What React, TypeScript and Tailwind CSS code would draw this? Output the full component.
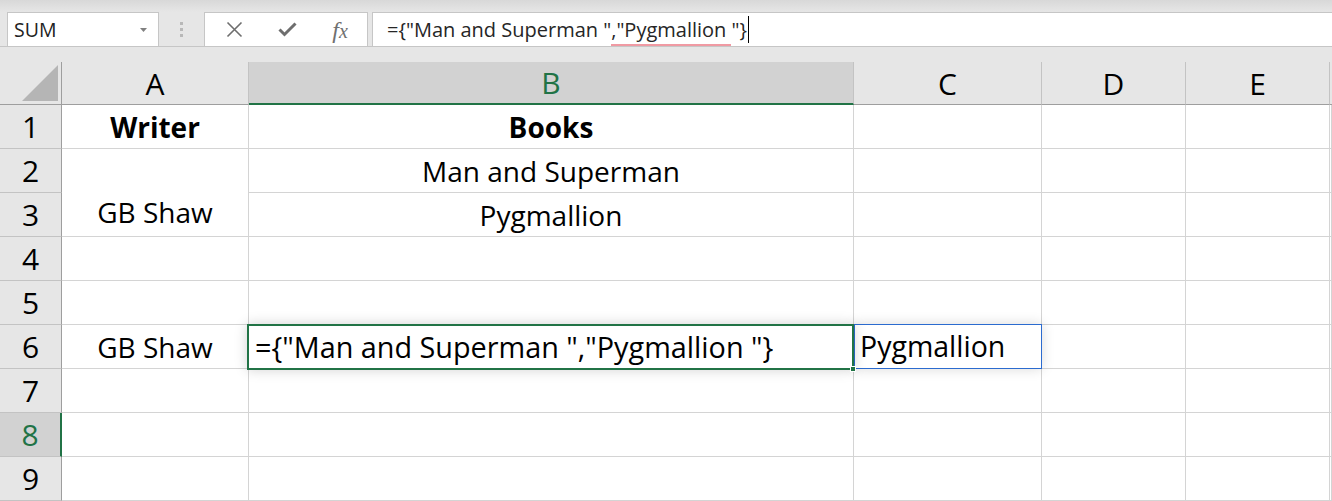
import React from "react";

const cellFont = "font-['Open_Sans','Noto_Sans',sans-serif]";
const uiFont = "font-['Open_Sans','Noto_Sans',sans-serif]";

function RowHeader({ n, selected }: { n: number; selected?: boolean }) {
  return (
    <div
      className={
        "flex items-center justify-center border-b border-[#c3c3c3] text-[30px] " +
        (selected
          ? "bg-[#d2d2d2] text-[#217346] border-r-2 border-r-[#217346]"
          : "bg-[#e6e6e6] text-black border-r border-r-[#9e9e9e]")
      }
    >
      {n}
    </div>
  );
}

function Cell({
  children,
  className = "",
}: {
  children?: React.ReactNode;
  className?: string;
}) {
  return (
    <div
      className={
        "relative flex items-center justify-center border-r border-b border-[#d4d4d4] bg-white text-[28px] text-black whitespace-nowrap " +
        className
      }
    >
      {children}
    </div>
  );
}

export default function App() {
  const formula = '={"Man and Superman ","Pygmallion "}';
  return (
    <div className={"w-[1332px] h-[501px] overflow-hidden bg-[#e6e6e6] flex flex-col " + cellFont}>
      {/* top band */}
      <div className="h-[12px] bg-gradient-to-b from-[#d8d8d8] to-[#e6e6e6]" />
      {/* formula bar */}
      <div className="h-[35px] flex items-stretch border-b border-[#c6c6c6] relative">
        <div className="w-[7px]" />
        <div className={"w-[152px] border border-[#c6c6c6] border-b-0 bg-white flex items-center justify-between pl-[6px] pr-[11px] text-[19.5px] text-[#222] " + uiFont}>
          <span>SUM</span>
          <svg width="7" height="4" viewBox="0 0 7 4">
            <path d="M0 0 L7 0 L3.5 4 Z" fill="#808080" />
          </svg>
        </div>
        <div className="w-[45px] flex flex-col items-center justify-center gap-[3px]">
          <div className="w-[3px] h-[3px] bg-[#b8b8b8]" />
          <div className="w-[3px] h-[3px] bg-[#b8b8b8]" />
          <div className="w-[3px] h-[3px] bg-[#b8b8b8]" />
        </div>
        <div className="w-[164px] border border-[#c6c6c6] border-b-0 bg-white flex items-center">
          <div className="w-[56px] flex justify-center pl-[2px]">
            <svg width="17" height="17" viewBox="0 0 17 17">
              <path d="M1.5 1.5 L15.5 15.5 M15.5 1.5 L1.5 15.5" stroke="#6e6e6e" strokeWidth="1.6" fill="none" />
            </svg>
          </div>
          <div className="w-[52px] flex justify-center">
            <svg width="19" height="15" viewBox="0 0 19 15">
              <path d="M1.5 7.5 L6.5 12.5 L17.5 1.5" stroke="#6e6e6e" strokeWidth="3" fill="none" />
            </svg>
          </div>
          <div className="w-[54px] flex justify-center">
            <span className="font-['Liberation_Serif',serif] italic text-[24px] text-[#707070] leading-none">
              f<span className="text-[20px]">x</span>
            </span>
          </div>
        </div>
        <div className="w-[4px]" />
        <div className={"flex-1 border-t border-l border-[#c6c6c6] bg-white flex items-center pl-[14px] text-[20px] text-[#262626] " + uiFont}>
          <span className="relative whitespace-pre">
            {'={"Man and Superman "'}
            <span className="relative">
              {',"Pygmallion'}
              <span className="absolute left-0 -right-[5px] -bottom-[3px] h-[2px] bg-[#f09aa3]" />
            </span>
            {' "}'}
          </span>
          <div className="w-[1px] h-[27px] bg-black ml-[1px]" />
        </div>
      </div>
      <div className="h-[15px]" />
      {/* sheet */}
      <div className="grid grid-cols-[62px_187px_605px_188px_144px_144px_1fr] grid-rows-[43px_repeat(9,44px)]">
        {/* header row */}
        <div className="relative bg-[#e6e6e6] border-r border-b border-[#9e9e9e]">
          <svg className="absolute right-[3px] bottom-[3px]" width="36" height="36" viewBox="0 0 36 36">
            <path d="M36 0 L36 36 L0 36 Z" fill="#b5b5b5" />
          </svg>
        </div>
        <div className="flex items-center justify-center bg-[#e6e6e6] border-r border-r-[#c3c3c3] border-b border-b-[#9e9e9e] text-[30px]">A</div>
        <div className="flex items-center justify-center bg-[#d2d2d2] border-r border-r-[#c3c3c3] border-b-2 border-b-[#217346] text-[30px] text-[#217346]">B</div>
        <div className="flex items-center justify-center bg-[#e6e6e6] border-r border-r-[#c3c3c3] border-b border-b-[#9e9e9e] text-[30px]">C</div>
        <div className="flex items-center justify-center bg-[#e6e6e6] border-r border-r-[#c3c3c3] border-b border-b-[#9e9e9e] text-[30px]">D</div>
        <div className="flex items-center justify-center bg-[#e6e6e6] border-r border-r-[#c3c3c3] border-b border-b-[#9e9e9e] text-[30px]">E</div>
        <div className="bg-[#e6e6e6] border-b border-b-[#9e9e9e]" />

        {/* row 1 */}
        <RowHeader n={1} />
        <Cell className="font-bold">Writer</Cell>
        <Cell className="font-bold">Books</Cell>
        <Cell />
        <Cell />
        <Cell />
        <Cell />

        {/* row 2 (A2:A3 merged) */}
        <RowHeader n={2} />
        <Cell className="row-span-2 !items-end pb-[3px]">GB Shaw</Cell>
        <Cell>Man and Superman</Cell>
        <Cell />
        <Cell />
        <Cell />
        <Cell />

        {/* row 3 */}
        <RowHeader n={3} />
        <Cell>Pygmallion</Cell>
        <Cell />
        <Cell />
        <Cell />
        <Cell />

        {/* rows 4, 5 */}
        {[4, 5].map((n) => (
          <React.Fragment key={n}>
            <RowHeader n={n} />
            <Cell />
            <Cell />
            <Cell />
            <Cell />
            <Cell />
            <Cell />
          </React.Fragment>
        ))}

        {/* row 6 */}
        <RowHeader n={6} />
        <Cell>GB Shaw</Cell>
        <Cell className="z-20 !justify-start">
          <div className="absolute -left-[2px] -top-[1px] -right-[1px] -bottom-[2px] border-2 border-[#217346] bg-white shadow-[0_0_12px_rgba(0,0,0,0.18)] flex items-center pl-[6px] text-[28.8px]">
            <span className="whitespace-pre">{formula}</span>
            <div className="absolute -right-[4px] -bottom-[4px] w-[6px] h-[6px] bg-[#217346] border border-white" />
          </div>
        </Cell>
        <Cell className="z-10 !justify-start">
          <div className="absolute left-0 -top-[1px] -right-[1px] -bottom-[1px] border border-[#2b6bcf] bg-white shadow-[0_0_12px_rgba(0,0,0,0.15)] flex items-center pl-[5px] text-[28.5px]">
            Pygmallion
          </div>
        </Cell>
        <Cell />
        <Cell />
        <Cell />

        {/* rows 7-9 */}
        {[7, 8, 9].map((n) => (
          <React.Fragment key={n}>
            <RowHeader n={n} selected={n === 8} />
            <Cell />
            <Cell />
            <Cell />
            <Cell />
            <Cell />
            <Cell />
          </React.Fragment>
        ))}
      </div>
    </div>
  );
}
